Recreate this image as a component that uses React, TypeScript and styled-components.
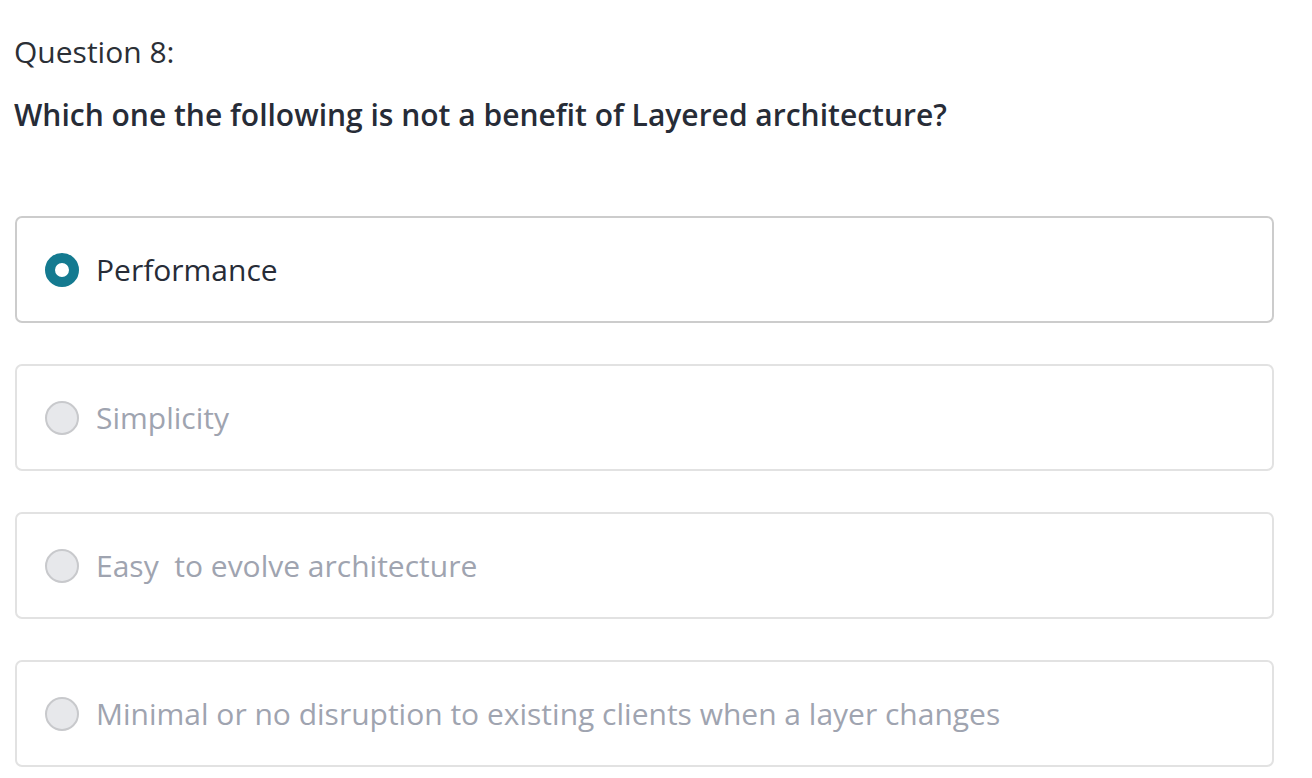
import React from "react";
import styled, { createGlobalStyle } from "styled-components";

const Global = createGlobalStyle`
	body {
		margin: 0;
		background: #ffffff;
		font-family: "Open Sans", "Noto Sans", sans-serif;
	}
`;

const Page = styled.div`
	padding: 30px 38px 0 14px;
`;

const Label = styled.div`
	font-size: 30px;
	line-height: 44px;
	color: #2b2f36;
`;

const Prompt = styled.div`
	margin-top: 21px;
	font-size: 30px;
	line-height: 40px;
	font-weight: 600;
	color: #272c37;
`;

const Options = styled.div`
	margin-top: 81px;
	margin-left: 1px;
	display: flex;
	flex-direction: column;
	gap: 41px;
`;

const Option = styled.div<{ $selected: boolean }>`
	display: flex;
	align-items: center;
	gap: 17px;
	height: 107px;
	box-sizing: border-box;
	padding: 0 28px;
	border: 2px solid ${({ $selected }) => ($selected ? "#cccccc" : "#e2e2e2")};
	border-radius: 7px;
	background: #ffffff;
`;

const Radio = styled.span<{ $selected: boolean }>`
	flex: none;
	width: 34px;
	height: 34px;
	box-sizing: border-box;
	border-radius: 50%;
	${({ $selected }) =>
		$selected
			? `
			border: 10px solid #147a90;
			background: #ffffff;
		`
			: `
			border: 2px solid #c8c9cc;
			background: #e7e8eb;
		`}
`;

const Text = styled.span<{ $selected: boolean }>`
	font-size: 30px;
	white-space: pre;
	color: ${({ $selected }) => ($selected ? "#272c37" : "#9fa4b0")};
`;

const answers = [
	"Performance",
	"Simplicity",
	"Easy  to evolve architecture",
	"Minimal or no disruption to existing clients when a layer changes",
];

export default function App() {
	const selected = 0;
	return (
		<>
			<Global />
			<Page>
				<Label>Question 8:</Label>
				<Prompt>Which one the following is not a benefit of Layered architecture?</Prompt>
				<Options>
					{answers.map((answer, i) => (
						<Option key={answer} $selected={i === selected}>
							<Radio $selected={i === selected} />
							<Text $selected={i === selected}>{answer}</Text>
						</Option>
					))}
				</Options>
			</Page>
		</>
	);
}
